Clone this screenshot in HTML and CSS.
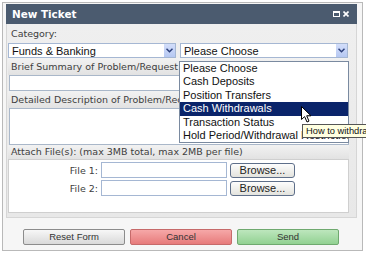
FILE: index.html
```html
<!DOCTYPE html>
<html lang="en">
<head>
  <meta charset="UTF-8" />
  <title>New Ticket</title>
  <link rel="stylesheet" href="styles.css">
</head>
<body>
  <div class="dialog">
    <div class="titlebar">
      <span class="title">New Ticket</span>
      <span class="tools">
        <svg width="7" height="6" viewBox="0 0 7 6"><rect x="0.5" y="0.5" width="6" height="5" fill="none" stroke="#fff"/><rect x="0" y="0" width="7" height="2" fill="#fff"/></svg>
        <svg width="6" height="6" viewBox="0 0 6 6"><path d="M0.5 0.5L5.5 5.5M5.5 0.5L0.5 5.5" stroke="#fff" stroke-width="1.6"/></svg>
      </span>
    </div>

    <div class="panel">
      <div class="band">Category:</div>
      <div class="selects">
        <div class="select">
          <span>Funds &amp; Banking</span>
          <span class="arrow"><svg width="7" height="5" viewBox="0 0 7 5"><path d="M0.5 0.8L3.5 3.8L6.5 0.8" fill="none" stroke="#2c3f7a" stroke-width="1.5"/></svg></span>
        </div>
        <div class="select">
          <span>Please Choose</span>
          <span class="arrow"><svg width="7" height="5" viewBox="0 0 7 5"><path d="M0.5 0.8L3.5 3.8L6.5 0.8" fill="none" stroke="#2c3f7a" stroke-width="1.5"/></svg></span>
          <ul class="options">
            <li>Please Choose</li>
            <li>Cash Deposits</li>
            <li>Position Transfers</li>
            <li class="active">Cash Withdrawals</li>
            <li>Transaction Status</li>
            <li>Hold Period/Withdrawal Restrictions</li>
          </ul>
          <svg class="cursor" width="11" height="17" viewBox="0 0 11 17"><path d="M0.5 0.5L0.5 13.5L3.6 10.6L6 16L8 15.1L5.7 9.8L10 9.8Z" fill="#fff" stroke="#000" stroke-width="1" stroke-linejoin="round"/></svg>
          <div class="tooltip">How to withdraw funds</div>
        </div>
      </div>

      <div class="band">Brief Summary of Problem/Request</div>
      <div class="input"></div>

      <div class="band">Detailed Description of Problem/Request</div>
      <div class="input textarea"></div>

      <div class="band small">Attach File(s): (max 3MB total, max 2MB per file)</div>
      <div class="files">
        <div class="file-row">
          <span class="file-label">File 1:</span>
          <span class="file-input"></span>
          <span class="browse">Browse...</span>
        </div>
        <div class="file-row">
          <span class="file-label">File 2:</span>
          <span class="file-input"></span>
          <span class="browse">Browse...</span>
        </div>
      </div>
    </div>

    <div class="footer">
      <span class="btn reset">Reset Form</span>
      <span class="btn cancel">Cancel</span>
      <span class="btn send">Send</span>
    </div>
  </div>
</body>
</html>
```

FILE: styles.css
```css
body {
  margin: 0;
  padding: 2px;
  background: #fff;
  overflow: hidden;
  font-family: 'DejaVu Sans', Verdana, sans-serif;
}

.dialog {
  box-sizing: border-box;
  width: 361px;
  height: 249px;
  border: 1px solid #b9b9b9;
  background: #f6f6f6;
  padding: 1px 5px 0 3px;
}

.titlebar {
  height: 20px;
  background: #4b5b6f;
  color: #fff;
  display: flex;
  align-items: center;
  justify-content: space-between;
  padding: 0 8px 0 6px;
}

.title {
  font-weight: bold;
  font-size: 10.4px;
}

.tools {
  display: flex;
  gap: 3px;
  align-items: center;
}

.panel {
  background: linear-gradient(#efefef, #e8e8e8);
  border: 1px solid #d6d6d6;
  border-top: none;
  padding: 2px 7px 0 1px;
  height: 191px;
}

.band {
  font-size: 9.5px;
  color: #404040;
  height: 17px;
  line-height: 17px;
  padding-left: 3px;
  background: linear-gradient(#f2f2f2, #e2e2e2);
}

.band:first-child {
  height: 17px;
  line-height: 16px;
  background: none;
}

.band.small {
  height: 14px;
  line-height: 13px;
}

.selects {
  display: flex;
  gap: 4px;
}

.select {
  position: relative;
  box-sizing: border-box;
  width: 168px;
  height: 15px;
  background: #fff;
  border: 1px solid #a5b7d3;
  display: flex;
  align-items: center;
  justify-content: space-between;
  padding-left: 3px;
  font-family: 'Liberation Sans', Arial, sans-serif;
  font-size: 11px;
  color: #111;
}

.arrow {
  width: 11px;
  height: 13px;
  background: linear-gradient(#d3defa, #b6c8f2);
  display: flex;
  align-items: center;
  justify-content: center;
}

.options {
  position: absolute;
  left: -2px;
  top: 17px;
  width: 168px;
  margin: 0;
  padding: 0;
  list-style: none;
  background: #fff;
  border: 1px solid #7a8aa0;
  z-index: 2;
}

.options li {
  height: 13.4px;
  line-height: 13.4px;
  padding-left: 3px;
  white-space: nowrap;
  overflow: hidden;
  color: #111;
}

.options li.active {
  background: #0a246a;
  color: #fff;
}

.cursor {
  position: absolute;
  left: 120px;
  top: 62px;
  z-index: 3;
}

.tooltip {
  position: absolute;
  left: 121px;
  top: 80px;
  height: 12px;
  line-height: 12px;
  padding: 0 3px;
  background: #ffffe1;
  border: 1px solid #555;
  font-size: 9.3px;
  white-space: nowrap;
  z-index: 4;
}

.input {
  box-sizing: border-box;
  height: 16px;
  margin-left: 1px;
  background: #fff;
  border: 1px solid #a9b7c9;
}

.textarea {
  height: 37px;
}

.files {
  box-sizing: border-box;
  height: 54px;
  background: #fff;
  border: 1px solid #cfcfcf;
  padding-top: 1px;
}

.file-row {
  display: flex;
  align-items: center;
  height: 18px;
}

.file-label {
  width: 89px;
  text-align: right;
  font-size: 9.5px;
  color: #404040;
  padding-right: 3px;
}

.file-input {
  box-sizing: border-box;
  width: 126px;
  height: 16px;
  border: 1px solid #a5b7d3;
  margin-right: 3px;
}

.browse {
  box-sizing: border-box;
  width: 65px;
  height: 15px;
  border: 1px solid #5e6f8a;
  border-radius: 3px;
  background: linear-gradient(#fdfdfd, #e3e3dd);
  font-family: 'Liberation Sans', Arial, sans-serif;
  font-size: 11px;
  color: #222;
  text-align: center;
  line-height: 13px;
}

.footer {
  display: flex;
  gap: 5px;
  padding: 11px 0 0 17px;
}

.btn {
  box-sizing: border-box;
  width: 102px;
  height: 16px;
  border-radius: 2px;
  font-family: 'Liberation Sans', Arial, sans-serif;
  font-size: 9.5px;
  color: #333;
  text-align: center;
  line-height: 14px;
}

.reset {
  border: 1px solid #8c8c8c;
  background: linear-gradient(#f7f7f7, #d9d9d9);
}

.cancel {
  border: 1px solid #c66a6a;
  background: linear-gradient(#f6a8a8, #e77b7b);
}

.send {
  border: 1px solid #6fa96f;
  background: linear-gradient(#bde6bd, #92d192);
}
```
